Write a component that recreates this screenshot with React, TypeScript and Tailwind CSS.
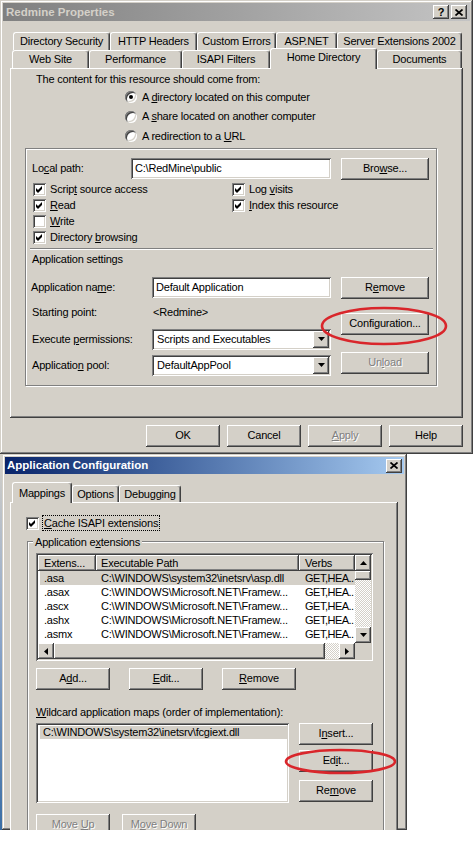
import React from 'react';

// classic Windows 3D bevels
const RAISED = 'bg-[#d4d0c8] shadow-[inset_-1px_-1px_#404040,inset_1px_1px_#ffffff,inset_-2px_-2px_#808080,inset_2px_2px_#d4d0c8]';
const SUNKEN = 'bg-white shadow-[inset_1px_1px_#808080,inset_-1px_-1px_#ffffff,inset_2px_2px_#404040,inset_-2px_-2px_#d4d0c8]';
const WINDOW = 'bg-[#d4d0c8] shadow-[inset_-1px_-1px_#404040,inset_1px_1px_#d4d0c8,inset_-2px_-2px_#808080,inset_2px_2px_#ffffff]';
const PANEL = 'bg-[#d4d0c8] shadow-[inset_-1px_-1px_#404040,inset_1px_1px_#ffffff,inset_-2px_-2px_#808080]';
const ETCHED = 'border border-[#808080] shadow-[inset_1px_1px_#ffffff,1px_1px_#ffffff]';
const GRAYED = 'text-[#808080] [text-shadow:1px_1px_0_#ffffff]';
const CHECKER = 'bg-[repeating-conic-gradient(#ffffff_0%_25%,#d4d0c8_0%_50%)] bg-[length:2px_2px]';

function Btn({ children, className = '', disabled = false }: { children: React.ReactNode; className?: string; disabled?: boolean }) {
  return (
    <div className={`${RAISED} flex items-center justify-center shrink-0 whitespace-nowrap ${disabled ? GRAYED : 'text-black'} ${className}`}>
      <span className="pb-[1px]">{children}</span>
    </div>
  );
}

function CapBtn({ children, className = '' }: { children: React.ReactNode; className?: string }) {
  return <div className={`${RAISED} w-[16px] h-[14px] flex items-center justify-center shrink-0 ${className}`}>{children}</div>;
}

const XGlyph = () => (
  <svg width="8" height="7" viewBox="0 0 8 7" className="block">
    <path d="M0.5 0.5 L7.5 6.5 M7.5 0.5 L0.5 6.5" stroke="#000" strokeWidth="1.7" />
  </svg>
);

function Tab({ label, className, active = false }: { label: string; className: string; active?: boolean }) {
  return (
    <div
      className={`${className} shrink-0 flex items-center justify-center whitespace-nowrap bg-[#d4d0c8] border-t border-l border-r border-t-white border-l-white border-r-[#404040] rounded-t-[3px] shadow-[inset_-1px_0_#808080] ${active ? 'relative top-[1px] z-10' : ''}`}
    >
      {label}
    </div>
  );
}

function Check({ checked = false }: { checked?: boolean }) {
  return (
    <span className={`${SUNKEN} block w-[13px] h-[13px] shrink-0`}>
      {checked && (
        <svg width="13" height="13" viewBox="0 0 13 13" className="block">
          <polygon points="3,5 5,7 9,3 9,6 5,10 3,8" fill="#000" />
        </svg>
      )}
    </span>
  );
}

function CheckRow({ checked, children }: { checked?: boolean; children: React.ReactNode }) {
  return (
    <div className="h-[16px] flex items-center">
      <Check checked={checked} />
      <span className="ml-[4px]">{children}</span>
    </div>
  );
}

function Radio({ checked = false }: { checked?: boolean }) {
  return (
    <span className="flex items-center justify-center w-[12px] h-[12px] rounded-full shrink-0 bg-white shadow-[inset_1px_1px_#808080,inset_-1px_-1px_#ffffff,inset_2px_2px_#404040,inset_-2px_-2px_#d4d0c8]">
      {checked && <span className="block w-[4px] h-[4px] rounded-full bg-black" />}
    </span>
  );
}

function Select({ value }: { value: string }) {
  return (
    <div className={`${SUNKEN} flex items-center w-[179px] h-[21px] p-[2px]`}>
      <span className="flex-1 pl-[3px]">{value}</span>
      <span className={`${RAISED} flex items-center justify-center w-[16px] h-[17px]`}>
        <svg width="7" height="4" viewBox="0 0 7 4" className="block">
          <polygon points="0,0 7,0 3.5,4" fill="#000" />
        </svg>
      </span>
    </div>
  );
}

function Arrow({ dir }: { dir: 'up' | 'down' | 'left' | 'right' }) {
  const pts = {
    up: '3.5,0 7,4 0,4',
    down: '0,0 7,0 3.5,4',
    left: '4,0 4,7 0,3.5',
    right: '0,0 4,3.5 0,7',
  }[dir];
  const vertical = dir === 'up' || dir === 'down';
  return (
    <div className={`${RAISED} w-[16px] h-[16px] flex items-center justify-center shrink-0`}>
      <svg width={vertical ? 7 : 4} height={vertical ? 4 : 7} className="block">
        <polygon points={pts} fill="#000" />
      </svg>
    </div>
  );
}

function RedRing({ className, w, h }: { className: string; w: number; h: number }) {
  return (
    <svg className={`absolute pointer-events-none ${className}`} width={w} height={h} viewBox={`0 0 ${w} ${h}`}>
      <ellipse cx={w / 2} cy={h / 2} rx={w / 2 - 2} ry={h / 2 - 2} fill="none" stroke="#d9262b" strokeWidth="2.6" />
    </svg>
  );
}

function PropertiesWindow() {
  return (
    <div className={`${WINDOW} h-[454px] p-[3px] flex flex-col`}>
      <div className="h-[18px] shrink-0 flex items-center pl-[3px] pr-[3px] bg-linear-to-r from-[#808080] to-[#c4c4c4]">
        <span className="flex-1 font-bold text-[11.5px] tracking-normal text-[#d4d0c8]">Redmine Properties</span>
        <CapBtn><span className="font-bold text-[11px] leading-none">?</span></CapBtn>
        <CapBtn className="ml-[2px]"><XGlyph /></CapBtn>
      </div>

      <div className="ml-[7px] mt-[11px] w-[453px]">
        <div className="flex ml-[3px] h-[18px]">
          <Tab className="w-[97px] h-[18px]" label="Directory Security" />
          <Tab className="w-[87px] h-[18px]" label="HTTP Headers" />
          <Tab className="w-[79px] h-[18px]" label="Custom Errors" />
          <Tab className="w-[61px] h-[18px]" label="ASP.NET" />
          <Tab className="w-[125px] h-[18px]" label="Server Extensions 2002" />
        </div>
        <div className="flex items-end ml-[2px] h-[18px]">
          <Tab className="w-[77px] h-[18px]" label="Web Site" />
          <Tab className="w-[93px] h-[18px]" label="Performance" />
          <Tab className="w-[88px] h-[18px]" label="ISAPI Filters" />
          <Tab active className="w-[107px] h-[21px] pb-[3px]" label="Home Directory" />
          <Tab className="w-[85px] h-[18px]" label="Documents" />
        </div>

        <div className={`${PANEL} h-[350px] pt-[5px]`}>
          <div className="ml-[26px] h-[13px]">The content for this resource should come from:</div>
          <div className="mt-[1.5px] ml-[115px]">
            <div className="h-[19.5px] flex items-center">
              <Radio checked />
              <span className="ml-[5px]">A <u>d</u>irectory located on this computer</span>
            </div>
            <div className="h-[19.5px] flex items-center">
              <Radio />
              <span className="ml-[5px]">A <u>s</u>hare located on another computer</span>
            </div>
            <div className="h-[19.5px] flex items-center">
              <Radio />
              <span className="ml-[5px]">A redirection to a <u>U</u>RL</span>
            </div>
          </div>

          <div className={`${ETCHED} mt-[1.5px] ml-[15px] w-[412px] h-[238px]`}>
            <div className="mt-[9px] ml-[6px] flex items-start">
              <div className="w-[99px] h-[21px] flex items-center">Lo<u>c</u>al path:</div>
              <div className={`${SUNKEN} w-[200px] h-[21px] flex items-center pl-[4px]`}>C:\RedMine\public</div>
              <Btn className="ml-[10px] w-[88px] h-[22px]">Bro<u>w</u>se...</Btn>
            </div>

            <div className="mt-[2px] ml-[7px] flex">
              <div className="w-[199px]">
                <CheckRow checked>Scrip<u>t</u> source access</CheckRow>
                <CheckRow checked><u>R</u>ead</CheckRow>
                <CheckRow><u>W</u>rite</CheckRow>
                <CheckRow checked>Directory <u>b</u>rowsing</CheckRow>
              </div>
              <div>
                <CheckRow checked>Log <u>v</u>isits</CheckRow>
                <CheckRow checked><u>I</u>ndex this resource</CheckRow>
              </div>
            </div>

            <div className="mt-[2px] ml-[4px] w-[403px] h-[2px] border-t border-t-[#808080] border-b border-b-white" />
            <div className="mt-[3.5px] ml-[6px] h-[13px]">Application settings</div>

            <div className="mt-[10.5px] ml-[5px] flex items-start">
              <div className="w-[300px]">
                <div className="h-[22px] flex items-center">
                  <span className="w-[121px]">Application na<u>m</u>e:</span>
                  <div className={`${SUNKEN} w-[179px] h-[21px] flex items-center pl-[4px]`}>Default Application</div>
                </div>
                <div className="mt-[7.5px] h-[13px] flex items-center">
                  <span className="w-[121px] pl-[1px]">Starting point:</span>
                  <span className="pl-[1px]">&lt;Redmine&gt;</span>
                </div>
                <div className="mt-[9.5px] h-[21px] flex items-center">
                  <span className="w-[121px] pl-[1px]">Execute <u>p</u>ermissions:</span>
                  <Select value="Scripts and Executables" />
                </div>
                <div className="mt-[5px] h-[21px] flex items-center">
                  <span className="w-[121px] pl-[1px]">Applicatio<u>n</u> pool:</span>
                  <Select value="DefaultAppPool" />
                </div>
              </div>
              <div className="relative ml-[10px] w-[88px] flex flex-col">
                <Btn className="w-[88px] h-[22px]">R<u>e</u>move</Btn>
                <Btn className="mt-[14.5px] w-[88px] h-[22px]">Configuration...</Btn>
                <Btn disabled className="mt-[17px] w-[88px] h-[22px]">Un<u>l</u>oad</Btn>
                <RedRing className="left-[-21px] top-[29px]" w={128} h={40} />
              </div>
            </div>
          </div>
        </div>
      </div>

      <div className="mt-[7px] ml-[143px] flex gap-[7px]">
        <Btn className="w-[74px] h-[22px]">OK</Btn>
        <Btn className="w-[74px] h-[22px]">Cancel</Btn>
        <Btn disabled className="w-[74px] h-[22px]"><u>A</u>pply</Btn>
        <Btn className="w-[74px] h-[22px]">Help</Btn>
      </div>
    </div>
  );
}

const extensions = [
  ['.asa', 'C:\\WINDOWS\\system32\\inetsrv\\asp.dll', 'GET,HEA..'],
  ['.asax', 'C:\\WINDOWS\\Microsoft.NET\\Framew...', 'GET,HEA..'],
  ['.ascx', 'C:\\WINDOWS\\Microsoft.NET\\Framew...', 'GET,HEA..'],
  ['.ashx', 'C:\\WINDOWS\\Microsoft.NET\\Framew...', 'GET,HEA..'],
  ['.asmx', 'C:\\WINDOWS\\Microsoft.NET\\Framew...', 'GET,HEA..'],
];

function HeaderCell({ className, children }: { className: string; children: React.ReactNode }) {
  return (
    <div className={`${RAISED} h-[16px] flex items-center whitespace-nowrap overflow-hidden shrink-0 ${className}`}>
      {children}
    </div>
  );
}

function ConfigWindow() {
  return (
    <div className={`${WINDOW} w-[405px] h-[376px] p-[3px] overflow-hidden flex flex-col`}>
      <div className="h-[17px] shrink-0 flex items-center pl-[2px] pr-[2px] bg-linear-to-r from-[#0a246a] to-[#a6caf0]">
        <span className="flex-1 font-bold text-[11.5px] tracking-normal text-white">Application Configuration</span>
        <CapBtn><XGlyph /></CapBtn>
      </div>

      <div className="ml-[7px] mt-[11px] h-[17px] flex items-end shrink-0">
        <Tab active className="w-[60px] h-[21px]" label="Mappings" />
        <Tab className="w-[47px] h-[17px]" label="Options" />
        <Tab className="w-[62px] h-[17px]" label="Debugging" />
      </div>

      <div className={`${PANEL} ml-[5px] w-[388px] h-[400px] shrink-0 pt-[13px]`}>
        <div className="ml-[16px] h-[16px] flex items-center">
          <Check checked />
          <span className="ml-[3px] h-[16px] px-[1px] flex items-center border border-dotted border-black">
            <u>C</u>ache ISAPI extensions
          </span>
        </div>

        <div className={`${ETCHED} relative mt-[10px] ml-[17px] w-[357px] h-[320px]`}>
          <span className="absolute left-[5px] top-[-6px] px-[2px] h-[13px] bg-[#d4d0c8]">
            Application e<u>x</u>tensions
          </span>

          <div className={`${SUNKEN} mt-[11px] ml-[8px] w-[337px] h-[108px] p-[2px] flex flex-col`}>
            <div className="flex h-[88px]">
              <div className="w-[317px] flex flex-col">
                <div className="flex h-[16px]">
                  <HeaderCell className="w-[58px] pl-[6px]">Extens...</HeaderCell>
                  <HeaderCell className="w-[203px] pl-[5px]">Executable Path</HeaderCell>
                  <HeaderCell className="w-[56px] pl-[6px]">Verbs</HeaderCell>
                </div>
                <div className="flex-1 bg-white">
                  {extensions.map((r, i) => (
                    <div key={r[0]} className={`ml-[2px] h-[14px] flex items-center whitespace-nowrap ${i === 0 ? 'bg-[#d4d0c8]' : ''}`}>
                      <span className="w-[56px] pl-[4px] shrink-0">{r[0]}</span>
                      <span className="w-[203px] pl-[5px] shrink-0 overflow-hidden">{r[1]}</span>
                      <span className="w-[56px] pl-[6px] shrink-0 tracking-[-0.5px]">{r[2]}</span>
                    </div>
                  ))}
                </div>
              </div>
              <div className="w-[16px] flex flex-col">
                <Arrow dir="up" />
                <div className={`${RAISED} h-[9px]`} />
                <div className={`flex-1 ${CHECKER}`} />
                <Arrow dir="down" />
              </div>
            </div>
            <div className="flex h-[16px]">
              <Arrow dir="left" />
              <div className={`${RAISED} w-[271px] h-[16px]`} />
              <div className={`w-[14px] h-[16px] ${CHECKER}`} />
              <Arrow dir="right" />
              <div className="w-[16px] h-[16px] bg-[#d4d0c8]" />
            </div>
          </div>

          <div className="mt-[7px] ml-[8px] flex gap-[19px]">
            <Btn className="w-[74px] h-[22px]">A<u>d</u>d...</Btn>
            <Btn className="w-[74px] h-[22px]"><u>E</u>dit...</Btn>
            <Btn className="w-[74px] h-[22px]"><u>R</u>emove</Btn>
          </div>

          <div className="mt-[15.5px] ml-[8px] h-[13px]">
            <u>W</u>ildcard application maps (order of implementation):
          </div>

          <div className="mt-[4.5px] ml-[8px] flex items-start">
            <div className={`${SUNKEN} w-[253px] h-[80px] p-[2px]`}>
              <div className="mt-[1px] ml-[2px] w-[247px] h-[13px] bg-[#d4d0c8] pl-[3px] flex items-center whitespace-nowrap">
                C:\WINDOWS\system32\inetsrv\fcgiext.dll
              </div>
            </div>
            <div className="relative ml-[10px] flex flex-col">
              <Btn className="w-[74px] h-[22px]">I<u>n</u>sert...</Btn>
              <Btn className="mt-[5px] w-[74px] h-[22px]">Ed<u>i</u>t...</Btn>
              <Btn className="mt-[8px] w-[74px] h-[22px]">Re<u>m</u>ove</Btn>
              <RedRing className="left-[-15px] top-[25px]" w={113} h={27} />
            </div>
          </div>

          <div className="mt-[11px] ml-[8px] flex gap-[12px]">
            <Btn disabled className="w-[74px] h-[22px]">Move <u>U</u>p</Btn>
            <Btn disabled className="w-[74px] h-[22px]">M<u>o</u>ve Down</Btn>
          </div>
        </div>
      </div>
    </div>
  );
}

export default function App() {
  return (
    <div className="w-[473px] h-[861px] bg-white font-['Liberation_Sans',Arial,sans-serif] text-[11px] leading-[13px] tracking-[-0.2px] text-black select-none">
      <PropertiesWindow />
      <div className="flex">
        <div className="w-[2px] h-[376px] bg-linear-to-b from-[#d4d0c8] via-[#8aa4c8] to-[#3a6ea5]" />
        <ConfigWindow />
      </div>
    </div>
  );
}
